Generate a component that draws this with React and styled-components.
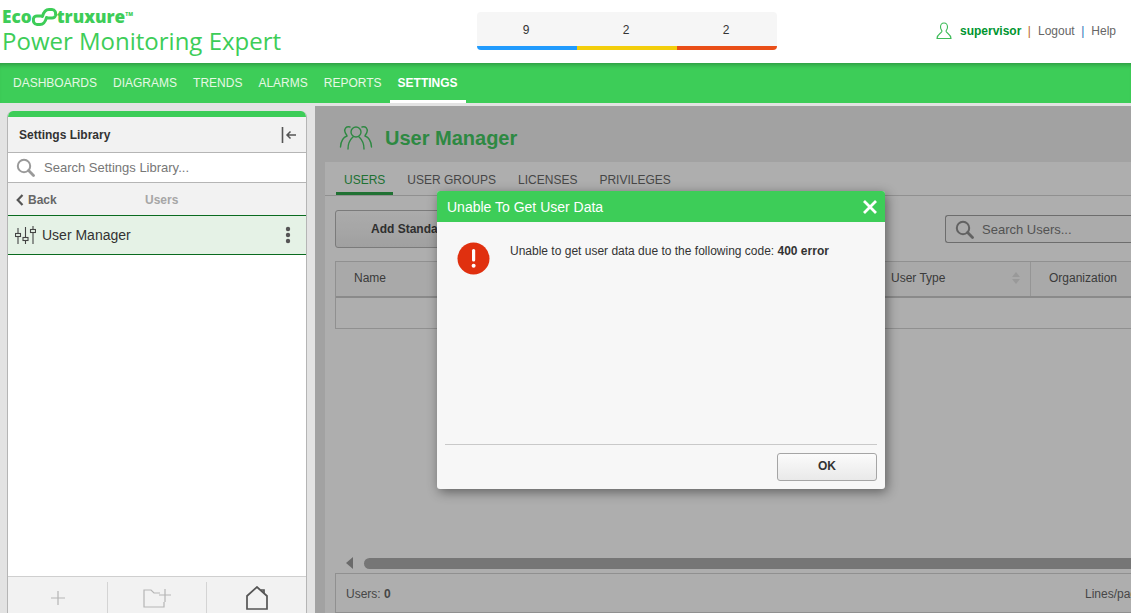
import React from "react";
import styled, { createGlobalStyle } from "styled-components";

const GlobalStyle = createGlobalStyle`
  html, body, #root { margin: 0; height: 100%; overflow: hidden; }
  body { font-family: "Liberation Sans", Arial, sans-serif; background: #e3e3e3; }
  * { box-sizing: border-box; }
`;

const GREEN = "#3dcd58";

const Page = styled.div`
  width: 1131px;
  height: 613px;
  display: flex;
  flex-direction: column;
  overflow: hidden;
`;

/* top header */
const Header = styled.header`
  height: 63px;
  flex: none;
  background: #fff;
  display: grid;
  grid-template-columns: 477px 300px 1fr;
  align-items: start;
`;
const Logo = styled.div`
  padding: 7px 0 0 2px;
  color: ${GREEN};
`;
const LogoTop = styled.div`
  display: flex;
  align-items: center;
  height: 20px;
  line-height: 16px;
  font-family: "Open Sans", "Liberation Sans", sans-serif;
  font-weight: 800;
  font-size: 17.2px;
  sup {
    font-size: 5px;
    align-self: flex-start;
    margin: 5px 0 0 0;
    line-height: 1;
  }
`;
const LogoName = styled.div`
  font-family: "Open Sans", sans-serif;
  font-weight: 400;
  font-size: 24px;
  line-height: 27px;
  white-space: nowrap;
`;
const Alarms = styled.div`
  margin-top: 12px;
  height: 38px;
  display: grid;
  grid-template-columns: 100px 100px 100px;
  background: #f6f6f6;
  border-radius: 4px;
  overflow: hidden;
`;
const AlarmCell = styled.div`
  border-bottom: 4px solid ${(p) => p.$color};
  color: #333;
  font-size: 12px;
  text-align: center;
  padding: 11px 2px 0 0;
`;
const UserBar = styled.div`
  display: flex;
  justify-content: flex-end;
  align-items: center;
  height: 100%;
  padding: 0 15px 2px 0;
  font-size: 12px;
  color: #666;
  svg { margin-right: 8px; }
`;
const UserName = styled.b`
  color: #009530;
`;
const Sep = styled.span`
  margin: 0 7px 0 6.5px;
  color: ${(p) => p.$color};
`;

/* green navigation */
const Nav = styled.nav`
  height: 40px;
  flex: none;
  background: ${GREEN};
  box-shadow: inset 0 5px 4px -3px rgba(0, 0, 0, 0.25);
  display: flex;
  padding-left: 5px;
`;
const NavItem = styled.a`
  padding: 0 8px;
  line-height: 40px;
  font-size: 12px;
  color: ${(p) => (p.$active ? "#fff" : "#e6f8e4")};
  font-weight: ${(p) => (p.$active ? 700 : 400)};
  border-bottom: ${(p) => (p.$active ? "3px solid #fff" : "none")};
  height: 40px;
`;

const Body = styled.div`
  flex: 1;
  min-height: 0;
  display: flex;
  position: relative;
  background: #e3e3e3;
  padding-top: 3px;
`;

/* left library */
const Library = styled.aside`
  width: 300px;
  margin: 5px 8px 0 7px;
  flex: none;
  display: flex;
  flex-direction: column;
  background: #fff;
  border: 1px solid #b5b5b5;
  border-top: none;
  border-bottom: none;
  border-radius: 6px 6px 0 0;
  overflow: hidden;
`;
const LibraryHead = styled.div`
  height: 42px;
  flex: none;
  border-top: 6px solid ${GREEN};
  background: #f2f2f2;
  border-bottom: 1px solid #b5b5b5;
  display: flex;
  align-items: center;
  justify-content: space-between;
  padding: 1px 9px 0 11px;
  font-size: 12px;
  font-weight: 700;
  color: #333;
`;
const LibrarySearch = styled.div`
  height: 30px;
  flex: none;
  display: flex;
  align-items: center;
  gap: 9px;
  padding-left: 8px;
  background: #fff;
  border-bottom: 1px solid #b5b5b5;
  font-size: 13px;
  color: #777;
`;
const BackRow = styled.div`
  height: 32px;
  flex: none;
  background: #f2f2f2;
  display: flex;
  align-items: center;
  padding: 1px 0 0 8px;
  font-size: 12px;
  font-weight: 700;
  color: #666;
`;
const BackLink = styled.span`
  display: flex;
  align-items: center;
  gap: 4px;
  width: 129px;
`;
const BackTitle = styled.span`
  color: #a6a6a6;
`;
const LibraryItem = styled.div`
  height: 40px;
  flex: none;
  display: flex;
  align-items: center;
  padding: 0 15px 0 7px;
  background: #e5f2e6;
  border-top: 1px solid #0a6b1f;
  border-bottom: 1px solid #0a6b1f;
  font-size: 14px;
  color: #333;
`;
const ItemLabel = styled.span`
  flex: 1;
  margin-left: 6px;
`;
const Spacer = styled.div`
  flex: 1;
`;
const LibraryFoot = styled.div`
  height: 37px;
  flex: none;
  background: #f2f2f2;
  border-top: 1px solid #cfcfcf;
  display: grid;
  grid-template-columns: 99px 99px 1fr;
  padding-top: 5px;
`;
const FootCell = styled.div`
  display: flex;
  justify-content: center;
  align-items: center;
  border-left: ${(p) => (p.$first ? "none" : "1px solid #d4d4d4")};
`;

/* user manager */
const Main = styled.main`
  flex: 1;
  min-width: 0;
  position: relative;
  background: #e9e9e9;
  overflow: hidden;
  display: flex;
  flex-direction: column;
`;
const TitleBand = styled.div`
  height: 56px;
  flex: none;
  display: flex;
  align-items: center;
  gap: 12px;
  padding: 8px 0 0 24px;
`;
const Title = styled.h1`
  margin: 0;
  font-size: 20px;
  font-weight: 700;
  color: #42c45f;
`;
const Panel = styled.section`
  flex: 1;
  margin-left: 10px;
  width: 830px;
  background: #fafafa;
  display: flex;
  flex-direction: column;
`;
const Tabs = styled.div`
  height: 34px;
  flex: none;
  display: flex;
  padding-left: 11px;
  border-bottom: 1px solid #cfcfcf;
`;
const Tab = styled.div`
  padding: 11px 8px 0;
  margin-right: 6px;
  font-size: 12px;
  height: 33px;
  color: ${(p) => (p.$active ? "#2ea24a" : "#666")};
  border-bottom: ${(p) => (p.$active ? "3px solid #2ea24a" : "none")};
`;
const Toolbar = styled.div`
  height: 65px;
  flex: none;
  padding: 14px 0 0 10px;
  display: flex;
  justify-content: space-between;
  align-items: flex-start;
`;
const AddButton = styled.button`
  width: 240px;
  height: 38px;
  font: 700 12px "Liberation Sans", Arial, sans-serif;
  color: #444;
  text-align: left;
  padding-left: 35px;
  background: linear-gradient(#f6f6f6, #e6e6e6);
  border: 1px solid #b0b0b0;
  border-radius: 3px;
`;
const UserSearch = styled.div`
  width: 210px;
  height: 28px;
  margin-top: 5px;
  display: flex;
  align-items: center;
  gap: 8px;
  padding-left: 9px;
  background: #f5f5f5;
  border: 1px solid #9c9c9c;
  border-right: none;
  border-radius: 3px 0 0 3px;
  font-size: 13px;
  color: #777;
`;
const Table = styled.div`
  margin-left: 10px;
  flex: none;
  border: 1px solid #cfcfcf;
  border-right: none;
`;
const HeadRow = styled.div`
  height: 36px;
  display: grid;
  grid-template-columns: 549px 146px 1fr;
  border-bottom: 2px solid #c6c6c6;
  background: #f2f2f2;
  font-size: 12px;
  color: #555;
`;
const HeadCell = styled.div`
  display: flex;
  align-items: center;
  justify-content: space-between;
  padding: 0 10px 2px ${(p) => p.$pad}px;
  border-right: 1px solid #d6d6d6;
`;
const EmptyRow = styled.div`
  height: 30px;
`;
const Scroller = styled.div`
  flex: 1;
  display: flex;
  align-items: flex-end;
  padding: 0 0 4px 21px;
  gap: 11px;
`;
const ScrollArrow = styled.div`
  width: 0;
  height: 0;
  border-top: 6px solid transparent;
  border-bottom: 6px solid transparent;
  border-right: 7px solid #999;
`;
const ScrollThumb = styled.div`
  flex: 1;
  height: 11px;
  background: #a9a9a9;
  border-radius: 6px 0 0 6px;
`;
const StatusBar = styled.div`
  height: 40px;
  flex: none;
  margin-left: 10px;
  border: 1px solid #cfcfcf;
  border-right: none;
  display: flex;
  justify-content: space-between;
  align-items: center;
  padding: 1px 0 0 10px;
  font-size: 12px;
  color: #666;
  overflow: hidden;
`;
const Lines = styled.span`
  white-space: nowrap;
  width: 70px;
`;

/* modal */
const Overlay = styled.div`
  position: absolute;
  inset: 0;
  background: rgba(0, 0, 0, 0.3);
`;
const Dialog = styled.div`
  position: absolute;
  left: 122px;
  top: 85px;
  width: 448px;
  height: 298px;
  background: #f7f7f7;
  border-radius: 3px;
  box-shadow: 2px 3px 12px rgba(0, 0, 0, 0.45);
  display: flex;
  flex-direction: column;
  overflow: hidden;
`;
const DialogHead = styled.div`
  height: 31px;
  flex: none;
  background: ${GREEN};
  color: #fff;
  font-size: 14px;
  display: flex;
  align-items: center;
  justify-content: space-between;
  padding: 0 7px 0 10px;
`;
const DialogBody = styled.div`
  flex: 1;
  display: flex;
  align-items: flex-start;
  padding: 20px 0 0 20px;
  font-size: 12px;
  color: #333;
  gap: 20px;
`;
const Message = styled.p`
  margin: 2px 0 0;
`;
const DialogFoot = styled.div`
  height: 45px;
  flex: none;
  margin: 0 8px;
  border-top: 1px solid #c9c9c9;
  display: flex;
  justify-content: flex-end;
  align-items: flex-start;
  padding-top: 8px;
`;
const OkButton = styled.button`
  width: 100px;
  height: 28px;
  padding: 0 0 2px;
  font: 700 12px "Liberation Sans", Arial, sans-serif;
  color: #333;
  background: linear-gradient(#fbfbfb, #e9e9e9);
  border: 1px solid #a5a5a5;
  border-radius: 3px;
`;

const SearchIcon = ({ color = "#9a9a9a" }) => (
  <svg width="19" height="19" viewBox="0 0 19 19" fill="none" stroke={color}>
    <circle cx="8" cy="8" r="6.2" strokeWidth="2" />
    <path d="M12.6 12.6 L17.5 17.5" strokeWidth="2.8" strokeLinecap="round" />
  </svg>
);

const LogoMark = () => (
  <svg width="25" height="20" viewBox="0 0 25 19" fill="none" stroke={GREEN} strokeWidth="3" strokeLinecap="round">
    <path d="M10.500 9 C11.500 5 13 2 17 2 H20 C23 2 24 5 23.500 8 C23 10 21.500 10.500 20 10.500 H15.500" />
    <path d="M14.500 10 C13.500 14 12 17 8 17 H5 C2 17 1 14 1.500 11 C2 9 3.500 8.500 5 8.500 H9.500" />
  </svg>
);

const UserIcon = () => (
  <svg width="16" height="18" viewBox="0 0 16 18" fill="none" stroke="#3dbb58" strokeWidth="1.1">
    <path d="M8 1 C5.5 1 4.5 3 4.5 5 C4.5 7 5.5 8 6 9 C6 11 1 12 1 16.5 H15 C15 12 10 11 10 9 C10.5 8 11.5 7 11.5 5 C11.5 3 10.5 1 8 1 Z" />
  </svg>
);

const SlidersIcon = () => (
  <svg width="21" height="20" viewBox="0 0 21 20" fill="none" stroke="#444" strokeWidth="1.1">
    <path d="M3 3 V8 M3 12 V19 M10.500 2 V12 M10.500 16 V19 M18 1 V4 M18 8 V19" />
    <rect x="0.500" y="8.500" width="5" height="3" />
    <rect x="8" y="12.500" width="5" height="3" />
    <rect x="15.500" y="4.500" width="5" height="3" />
  </svg>
);

const UsersIcon = () => (
  <svg width="34" height="26" viewBox="0 0 34 26" fill="none" stroke="#42c45f" strokeWidth="1.4" strokeLinecap="round">
    <circle cx="17" cy="7" r="5" />
    <path d="M9 24 C9 16 12 14 14 12 M25 24 C25 16 22 14 20 12" />
    <path d="M11 2 C7 1 5 4 6 7 C6.500 9 8 10 8 11 C5 12 2 15 1.500 22" />
    <path d="M23 2 C27 1 29 4 28 7 C27.500 9 26 10 26 11 C29 12 32 15 32.500 22" />
  </svg>
);

const AlertIcon = () => (
  <svg width="33" height="33" viewBox="0 0 33 33">
    <circle cx="16.500" cy="16.500" r="16" fill="#e0300f" />
    <rect x="15" y="7" width="3.200" height="12.500" rx="1.500" fill="#fff" />
    <circle cx="16.600" cy="23.700" r="2" fill="#fff" />
  </svg>
);

const navItems = ["DASHBOARDS", "DIAGRAMS", "TRENDS", "ALARMS", "REPORTS"];

export default function App() {
  return (
    <Page>
      <GlobalStyle />
      <Header>
        <Logo>
          <LogoTop>
            Eco
            <LogoMark />
            truxure<sup>TM</sup>
          </LogoTop>
          <LogoName>Power Monitoring Expert</LogoName>
        </Logo>
        <Alarms>
          <AlarmCell $color="#219bfd">9</AlarmCell>
          <AlarmCell $color="#f3ce0b">2</AlarmCell>
          <AlarmCell $color="#e94e18">2</AlarmCell>
        </Alarms>
        <UserBar>
          <UserIcon />
          <UserName>supervisor</UserName>
          <Sep $color="#b8651f">|</Sep>
          Logout
          <Sep $color="#1f74b8">|</Sep>
          Help
        </UserBar>
      </Header>
      <Nav>
        {navItems.map((n) => (
          <NavItem key={n}>{n}</NavItem>
        ))}
        <NavItem $active>SETTINGS</NavItem>
      </Nav>
      <Body>
        <Library>
          <LibraryHead>
            Settings Library
            <svg width="16" height="18" viewBox="0 0 16 18" fill="none" stroke="#555">
              <path d="M1.500 1 V17" strokeWidth="1.600" />
              <path d="M15 9 H6 M9.500 5.500 L6 9 L9.500 12.500" strokeWidth="1.500" />
            </svg>
          </LibraryHead>
          <LibrarySearch>
            <SearchIcon />
            Search Settings Library...
          </LibrarySearch>
          <BackRow>
            <BackLink>
              <svg width="8" height="12" viewBox="0 0 8 12" fill="none" stroke="#555" strokeWidth="2.200">
                <path d="M6.500 1 L1.700 6 L6.500 11" />
              </svg>
              Back
            </BackLink>
            <BackTitle>Users</BackTitle>
          </BackRow>
          <LibraryItem>
            <SlidersIcon />
            <ItemLabel>User Manager</ItemLabel>
            <svg width="6" height="18" viewBox="0 0 6 18" fill="#555">
              <circle cx="3" cy="3" r="2.200" />
              <circle cx="3" cy="9" r="2.200" />
              <circle cx="3" cy="15" r="2.200" />
            </svg>
          </LibraryItem>
          <Spacer />
          <LibraryFoot>
            <FootCell $first>
              <svg width="16" height="16" viewBox="0 0 16 16" stroke="#b5b5b5" strokeWidth="1.200">
                <path d="M8 1 V15 M1 8 H15" />
              </svg>
            </FootCell>
            <FootCell>
              <svg width="28" height="20" viewBox="0 0 28 20" fill="none" stroke="#b5b5b5" strokeWidth="1.200">
                <path d="M17 19 H1 V2 H8 L11 5 H17" />
                <path d="M22 1 V14 M16 7 H28" />
                <path d="M21 14 V19 H17" />
              </svg>
            </FootCell>
            <FootCell>
              <svg width="22" height="24" viewBox="0 0 22 24" fill="none" stroke="#555" strokeWidth="1.700">
                <path d="M1 23 V10 L11 1 L21 10 V23 Z" />
                <path d="M15 4 H18 V7" />
              </svg>
            </FootCell>
          </LibraryFoot>
        </Library>
        <Main>
          <TitleBand>
            <UsersIcon />
            <Title>User Manager</Title>
          </TitleBand>
          <Panel>
            <Tabs>
              <Tab $active>USERS</Tab>
              <Tab>USER GROUPS</Tab>
              <Tab>LICENSES</Tab>
              <Tab>PRIVILEGES</Tab>
            </Tabs>
            <Toolbar>
              <AddButton>Add Standard User</AddButton>
              <UserSearch>
                <SearchIcon color="#8d8d8d" />
                Search Users...
              </UserSearch>
            </Toolbar>
            <Table>
              <HeadRow>
                <HeadCell $pad={18}>Name</HeadCell>
                <HeadCell $pad={6}>
                  User Type
                  <svg width="8" height="14" viewBox="0 0 8 14" fill="#dcdcdc">
                    <path d="M4 1 L8 6 H0 Z M0 8 H8 L4 13 Z" />
                  </svg>
                </HeadCell>
                <HeadCell $pad={18}>Organization</HeadCell>
              </HeadRow>
              <EmptyRow />
            </Table>
            <Scroller>
              <ScrollArrow />
              <ScrollThumb />
            </Scroller>
            <StatusBar>
              <span>
                Users: <b>0</b>
              </span>
              <Lines>Lines/page</Lines>
            </StatusBar>
          </Panel>
          <Overlay />
          <Dialog>
            <DialogHead>
              Unable To Get User Data
              <svg width="16" height="16" viewBox="0 0 16 16" stroke="#fff" strokeWidth="2.800">
                <path d="M2 2 L14 14 M14 2 L2 14" />
              </svg>
            </DialogHead>
            <DialogBody>
              <AlertIcon />
              <Message>
                Unable to get user data due to the following code: <b>400 error</b>
              </Message>
            </DialogBody>
            <DialogFoot>
              <OkButton>OK</OkButton>
            </DialogFoot>
          </Dialog>
        </Main>
      </Body>
    </Page>
  );
}
